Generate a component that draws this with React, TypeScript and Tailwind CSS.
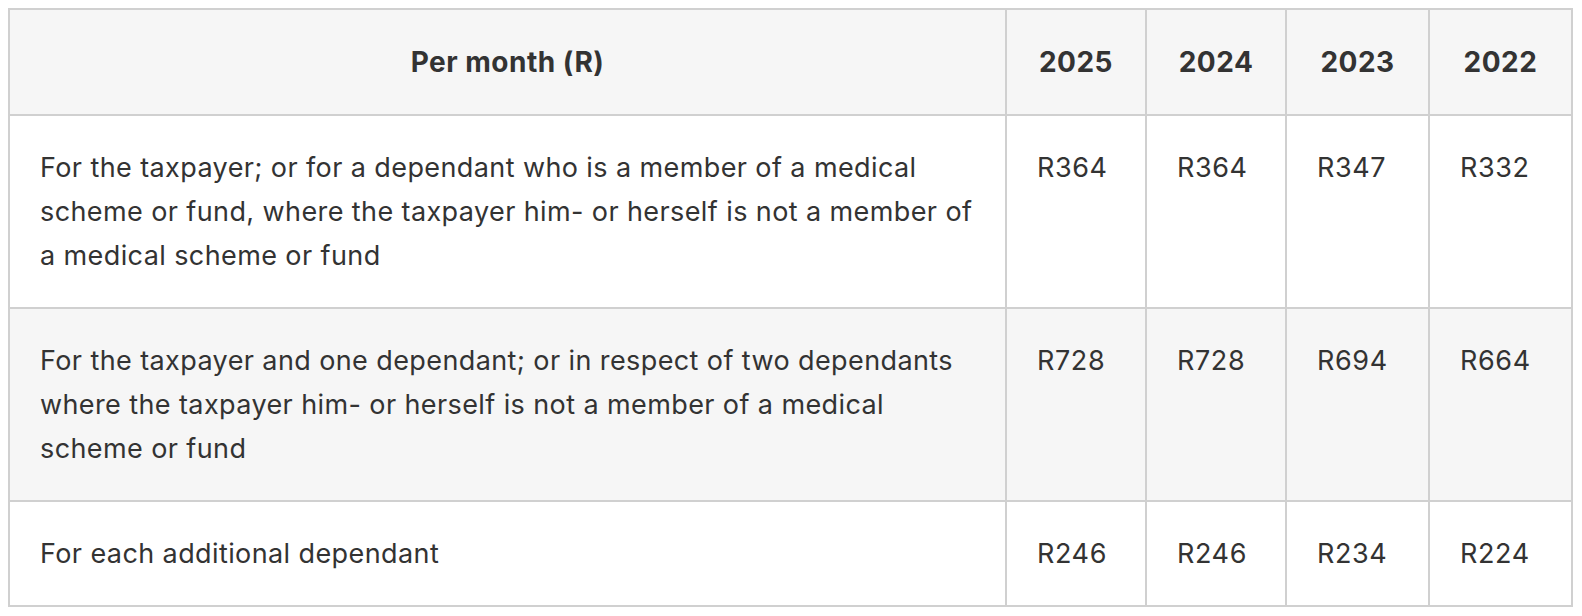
import React from "react";

const rows: { label: React.ReactNode; values: string[]; shaded: boolean }[] = [
  {
    label: (
      <>
        For the taxpayer; or for a dependant who is a member of a medical
        <br />
        scheme or fund, where the taxpayer him- or herself is not a member of
        <br />a medical scheme or fund
      </>
    ),
    values: ["R364", "R364", "R347", "R332"],
    shaded: false,
  },
  {
    label: (
      <>
        For the taxpayer and one dependant; or in respect of two dependants
        <br />
        where the taxpayer him- or herself is not a member of a medical
        <br />
        scheme or fund
      </>
    ),
    values: ["R728", "R728", "R694", "R664"],
    shaded: true,
  },
  {
    label: <>For each additional dependant</>,
    values: ["R246", "R246", "R234", "R224"],
    shaded: false,
  },
];

const years = ["2025", "2024", "2023", "2022"];

export default function App() {
  return (
    <div
      className="w-[1582px] h-[616px] bg-white pt-[8px] pl-[8px]"
      style={{ fontFamily: "Inter, 'Noto Sans', sans-serif" }}
    >
      <div className="w-[1565px] grid grid-cols-[995px_138px_138px_141px_141px] gap-[2px] p-[2px] bg-[#d0d0d0] text-[#333333]">
        <div className="bg-[#f6f6f6] py-[30px] px-[30px] text-center font-bold text-[28px] tracking-[0.5px] leading-[44px]">
          Per month (R)
        </div>
        {years.map((y) => (
          <div
            key={y}
            className="bg-[#f6f6f6] py-[30px] text-center font-bold text-[28px] tracking-[0.5px] leading-[44px]"
          >
            {y}
          </div>
        ))}
        {rows.map((r, i) => (
          <React.Fragment key={i}>
            <div
              className={`${r.shaded ? "bg-[#f6f6f6]" : "bg-white"} pt-[30px] pb-[29px] pl-[30px] pr-[10px] text-[27px] tracking-[0.4px] leading-[44px] whitespace-nowrap`}
            >
              {r.label}
            </div>
            {r.values.map((v, j) => (
              <div
                key={j}
                className={`${r.shaded ? "bg-[#f6f6f6]" : "bg-white"} pt-[30px] pb-[29px] pl-[30px] text-[27px] tracking-[0.6px] leading-[44px]`}
              >
                {v}
              </div>
            ))}
          </React.Fragment>
        ))}
      </div>
    </div>
  );
}
